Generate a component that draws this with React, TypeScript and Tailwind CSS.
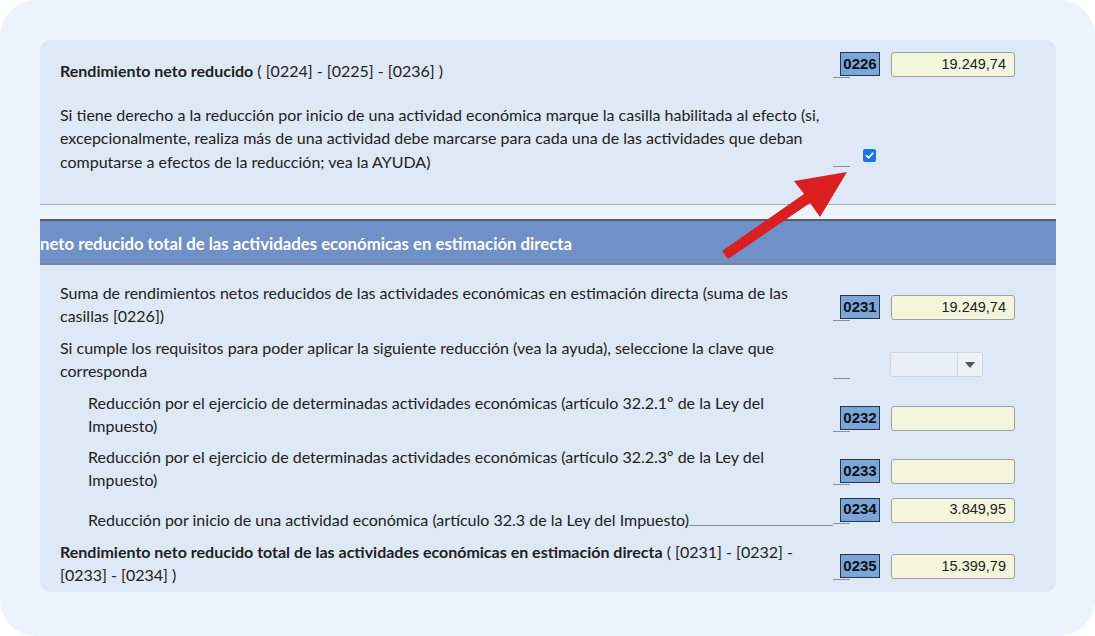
import React from "react";

const font = "font-['Lato','Noto_Sans',sans-serif] text-[16px] text-[#222]";

const CodeBox = ({ code }: { code: string }) => (
  <div className="w-[40px] h-[24px] bg-[#7ba6dc] border border-[#2b3440] flex items-center justify-center font-['Liberation_Sans',Arial,sans-serif] font-bold text-[15px] text-[#111]">
    {code}
  </div>
);

const ValueBox = ({ value }: { value?: string }) => (
  <div className="w-[124px] h-[25px] bg-[#f3f6da] border border-[#9ba1a6] rounded-[3px] flex items-center justify-end pr-[8px] font-['Liberation_Sans',Arial,sans-serif] text-[14.5px] text-[#222]">
    {value}
  </div>
);

const Field = ({ code, value }: { code: string; value?: string }) => (
  <div className="relative flex items-start pl-[7px] gap-[11px]">
    <span className="absolute left-0 bottom-[-1px] w-[17px] border-b border-[#8a8f98]" />
    <CodeBox code={code} />
    <ValueBox value={value} />
  </div>
);

type RowProps = {
  children: React.ReactNode;
  right: React.ReactNode;
  offset: number;
  indent?: boolean;
  className?: string;
};

const Row = ({ children, right, offset, indent, className }: RowProps) => (
  <div className={`flex items-start ${className ?? ""}`}>
    <div
      className={`${indent ? "ml-[28px] w-[745px]" : "w-[773px]"} ${font} leading-[23px]`}
      style={offset < 0 ? { paddingTop: -offset } : undefined}
    >
      {children}
    </div>
    <div style={offset > 0 ? { marginTop: offset } : undefined}>{right}</div>
  </div>
);

export default function App() {
  return (
    <div className="w-[1095px] h-[636px] bg-white">
      <div className="relative w-[1095px] h-[636px] rounded-[36px] bg-[#edf3fd] p-[40px]">
        <div className="w-[1016px] h-[552px] rounded-[10px] overflow-hidden bg-[#edf3fd] flex flex-col">
          <section className="bg-[#dfe8f6] pl-[20px] pt-[12px] h-[165px] shrink-0 border-b border-[#a7b0bd]">
            <Row offset={-6.5} right={<Field code="0226" value="19.249,74" />}>
              <b className="font-bold">Rendimiento neto reducido</b> ( [0224] - [0225] - [0236] )
            </Row>
            <div className="flex items-start mt-[21px]">
              <div className={`w-[773px] ${font} leading-[23.5px]`}>
                Si tiene derecho a la reducción por inicio de una actividad económica marque la casilla habilitada al efecto (si, excepcionalmente, realiza más de una actividad debe marcarse para cada una de las actividades que deban computarse a efectos de la reducción; vea la AYUDA)
              </div>
              <div className="relative w-[182px] h-[64px]">
                <span className="absolute left-0 top-[63px] w-[17px] border-b border-[#8a8f98]" />
                <span className="absolute left-[30px] top-[46px] w-[13px] h-[13px] rounded-[2px] bg-[#1a73e8] flex items-center justify-center">
                  <svg width="9" height="9" viewBox="0 0 10 10">
                    <path d="M1.5 5.2 L4 7.6 L8.6 2.4" stroke="white" strokeWidth="1.8" fill="none" strokeLinecap="round" strokeLinejoin="round" />
                  </svg>
                </span>
              </div>
            </div>
          </section>
          <div className="h-[14px] shrink-0 bg-[#edf3fb]" />
          <div className="h-[46px] shrink-0 bg-[#7090c8] border-t-2 border-t-[#565c68] border-b-2 border-b-[#7d8797] pt-[4px] flex items-center overflow-hidden whitespace-nowrap">
            <span className="font-['Lato','Noto_Sans',sans-serif] font-bold text-[16.75px] text-white">
              neto reducido total de las actividades económicas en estimación directa
            </span>
          </div>
          <section className="flex-1 bg-[#dfe8f6] pl-[20px] pt-[15.5px] flex flex-col gap-[9px]">
            <Row offset={14.5} right={<Field code="0231" value="19.249,74" />}>
              Suma de rendimientos netos reducidos de las actividades económicas en estimación directa (suma de las casillas [0226])
            </Row>
            <Row
              offset={16.5}
              right={
                <div className="relative pl-[57px]">
                  <span className="absolute left-0 bottom-[-2px] w-[17px] border-b border-[#8a8f98]" />
                  <div className="w-[93px] h-[25px] bg-[#e9eff9] border border-[#cfd6e2] rounded-[3px] flex">
                    <div className="flex-1" />
                    <div className="w-[25px] border-l border-[#d3d9e3] bg-[#edf1f8] flex items-center justify-center">
                      <svg width="10" height="6" viewBox="0 0 10 6">
                        <path d="M0 0 H10 L5 6 Z" fill="#555" />
                      </svg>
                    </div>
                  </div>
                </div>
              }
            >
              Si cumple los requisitos para poder aplicar la siguiente reducción (vea la ayuda), seleccione la clave que corresponda
            </Row>
            <Row indent offset={15.5} right={<Field code="0232" />}>
              Reducción por el ejercicio de determinadas actividades económicas (artículo 32.2.1º de la Ley del Impuesto)
            </Row>
            <Row indent offset={14.5} right={<Field code="0233" />} className="-mt-[1px]">
              Reducción por el ejercicio de determinadas actividades económicas (artículo 32.2.3º de la Ley del Impuesto)
            </Row>
            <div className="flex items-start -mt-[2px]">
              <div className={`ml-[28px] w-[745px] pt-[10px] ${font} leading-[23px] flex items-end`}>
                <span>Reducción por inicio de una actividad económica (artículo 32.3 de la Ley del Impuesto)</span>
                <span className="flex-1 border-b border-[#8a8f98] mb-[5px]" />
              </div>
              <Field code="0234" value="3.849,95" />
            </div>
            <Row offset={14.5} right={<Field code="0235" value="15.399,79" />}>
              <b className="font-bold">Rendimiento neto reducido total de las actividades económicas en estimación directa</b> ( [0231] - [0232] - [0233] - [0234] )
            </Row>
          </section>
        </div>
        <svg className="absolute left-0 top-0 pointer-events-none" width="1095" height="636" viewBox="0 0 1095 636">
          <polygon
            points="722,251 804,194 794,181 847,172 820,217 810,203 728,259"
            fill="#d91f1f"
          />
        </svg>
      </div>
    </div>
  );
}
